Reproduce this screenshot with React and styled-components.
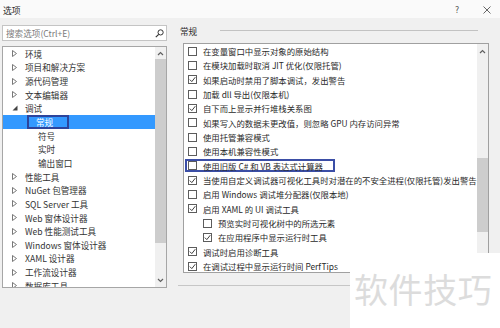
import React from "react";
import styled, { createGlobalStyle } from "styled-components";

const GlobalStyle = createGlobalStyle`
  html, body { margin: 0; padding: 0; }
  body {
    width: 500px;
    height: 328px;
    overflow: hidden;
    background: #f0f0f0;
    font-family: "Noto Sans CJK SC", "Noto Sans", sans-serif;
  }
  * { box-sizing: border-box; }
`;

const Window = styled.div`
  position: relative;
  width: 500px;
  height: 328px;
  display: flex;
  flex-direction: column;
  background: #f0f0f0;
  color: #2a2a2a;
  font-size: 8.6px;
  overflow: hidden;
`;

const TitleBar = styled.div`
  height: 18px;
  flex: none;
  background: #fafafa;
  display: flex;
  align-items: center;
  justify-content: space-between;
  padding: 2px 0 0 3px;
`;

const Title = styled.span`
  font-size: 8.8px;
  color: #2b2b2b;
`;

const TitleButtons = styled.div`
  display: flex;
  gap: 4px;
  height: 100%;
`;

const TitleButton = styled.div`
  width: 26px;
  height: 100%;
  display: flex;
  align-items: center;
  justify-content: center;
  color: #555;
  font-size: 8px;
  font-family: "DejaVu Sans", sans-serif;
`;

const Body = styled.div`
  flex: 1;
  display: flex;
  padding: 7px 0 0 2px;
  min-height: 0;
`;

const LeftPane = styled.div`
  width: 165px;
  flex: none;
  display: flex;
  flex-direction: column;
`;

const SearchBox = styled.div`
  height: 16px;
  background: #fff;
  border: 1px solid #c4c4c4;
  display: flex;
  align-items: center;
  justify-content: space-between;
  padding: 0 2px 0 3px;
  color: #7a7a7a;
`;

const Tree = styled.div`
  margin-top: 5px;
  height: 242px;
  background: #fff;
  border: 1px solid #a6a6a6;
  display: flex;
  overflow: hidden;
`;

const TreeList = styled.div`
  flex: 1;
  display: flex;
  flex-direction: column;
  min-width: 0;
`;

const TreeRow = styled.div`
  height: 13.65px;
  flex: none;
  display: flex;
  align-items: center;
  gap: 3px;
  padding-left: ${(p) => 6 + p.$depth * 13}px;
  background: ${(p) => (p.$selected ? "#3399ff" : "transparent")};
  color: ${(p) => (p.$selected ? "#fff" : "#333")};
  white-space: nowrap;
`;

const ArrowSlot = styled.span`
  width: 11px;
  height: 100%;
  flex: none;
  display: flex;
  align-items: center;
  justify-content: center;
`;

const FocusLabel = styled.span`
  height: 100%;
  display: flex;
  align-items: center;
  border: 2px solid ${(p) => (p.$focused ? "#2d449c" : "transparent")};
  margin-left: ${(p) => (p.$focused ? -9 : 0)}px;
  padding: 0 ${(p) => (p.$focused ? 14 : 0)}px 0 ${(p) => (p.$focused ? 7 : 0)}px;
`;

const ScrollBar = styled.div`
  width: 11px;
  flex: none;
  background: #f0f0f0;
  display: flex;
  flex-direction: column;
  align-items: center;
`;

const ScrollArrow = styled.div`
  height: ${(p) => p.$h}px;
  width: 100%;
  flex: none;
  display: flex;
  align-items: center;
  justify-content: center;
`;

const Thumb = styled.div`
  width: 100%;
  flex: none;
  background: #cdcdcd;
`;

const ScrollSpacer = styled.div`
  flex: 1;
`;

const RightPane = styled.div`
  flex: 1;
  margin-left: 11px;
  display: flex;
  flex-direction: column;
  min-width: 0;
`;

const SectionHeader = styled.div`
  height: 11px;
  display: flex;
  align-items: center;
  padding-left: 2px;
  margin-right: 22px;
  color: #2b2b2b;
`;

const HeaderRule = styled.div`
  flex: 1;
  height: 1px;
  margin-left: 23px;
  background: #c2c2c2;
`;

const OptionsBox = styled.div`
  margin: 7px 0 0 5px;
  width: 306px;
  height: 230px;
  background: #fff;
  border: 1px solid #a0a0a0;
  display: flex;
  overflow: hidden;
`;

const OptionList = styled.div`
  flex: 1;
  min-width: 0;
  overflow: hidden;
  display: flex;
  flex-direction: column;
  font-size: 8.4px;
`;

const OptionRow = styled.div`
  height: 14.33px;
  flex: none;
  display: flex;
  align-items: center;
  padding-left: ${(p) => 4 + p.$indent * 15}px;
  white-space: nowrap;
`;

const OptionContent = styled.div`
  height: 13px;
  display: flex;
  align-items: center;
  gap: 6px;
  margin-left: -3px;
  padding: 0 ${(p) => (p.$focused ? 10 : 0)}px 0 1px;
  border: 2px solid ${(p) => (p.$focused ? "#3b4ea6" : "transparent")};
`;

const Box = styled.span`
  width: 9px;
  height: 9px;
  flex: none;
  border: 1px solid #5c5c5c;
  background: #fff;
  display: flex;
  align-items: center;
  justify-content: center;
`;

const BottomRule = styled.div`
  margin: 12px 11px 0 0;
  height: 1px;
  background: #c6c6c6;
`;

const Watermark = styled.div`
  position: absolute;
  right: 0;
  bottom: 0;
  width: 150px;
  height: 75px;
  background: #fff;
  display: flex;
  align-items: center;
  padding: 0 0 4px 4px;
  font-size: 34px;
  letter-spacing: 0.6px;
  color: #dcdcdc;
  white-space: nowrap;
`;

const Closed = () => (
  <svg width="5" height="7" viewBox="0 0 5 7">
    <polygon points="0.5,0.5 4.5,3.5 0.5,6.5" fill="none" stroke="#6a6a6a" strokeWidth="0.9" />
  </svg>
);

const Open = () => (
  <svg width="6" height="6" viewBox="0 0 6 6">
    <polygon points="5.5,0.5 5.5,5.5 0.5,5.5" fill="#444" />
  </svg>
);

const Up = () => (
  <svg width="7" height="5" viewBox="0 0 7 5">
    <polyline points="1,4 3.5,1.5 6,4" fill="none" stroke="#606060" strokeWidth="1.2" />
  </svg>
);

const Down = () => (
  <svg width="7" height="5" viewBox="0 0 7 5">
    <polyline points="1,1 3.5,3.5 6,1" fill="none" stroke="#606060" strokeWidth="1.2" />
  </svg>
);

const Check = () => (
  <svg width="7" height="7" viewBox="0 0 7 7">
    <polyline points="0.8,3.6 2.8,5.6 6.3,1.2" fill="none" stroke="#2a2a2a" strokeWidth="0.9" />
  </svg>
);

const SearchIcon = () => (
  <svg width="9" height="9" viewBox="0 0 9 9">
    <circle cx="5.6" cy="3.4" r="2.6" fill="none" stroke="#333" strokeWidth="1" />
    <line x1="3.7" y1="5.3" x2="0.8" y2="8.2" stroke="#333" strokeWidth="1.2" />
  </svg>
);

const CloseIcon = () => (
  <svg width="8" height="8" viewBox="0 0 8 8">
    <path d="M0.5 0.5 L7.5 7.5 M7.5 0.5 L0.5 7.5" stroke="#555" strokeWidth="0.9" />
  </svg>
);

const treeItems = [
  { label: "环境", arrow: "closed", depth: 0 },
  { label: "项目和解决方案", arrow: "closed", depth: 0 },
  { label: "源代码管理", arrow: "closed", depth: 0 },
  { label: "文本编辑器", arrow: "closed", depth: 0 },
  { label: "调试", arrow: "open", depth: 0 },
  { label: "常规", depth: 1, selected: true },
  { label: "符号", depth: 1 },
  { label: "实时", depth: 1 },
  { label: "输出窗口", depth: 1 },
  { label: "性能工具", arrow: "closed", depth: 0 },
  { label: "NuGet 包管理器", arrow: "closed", depth: 0 },
  { label: "SQL Server 工具", arrow: "closed", depth: 0 },
  { label: "Web 窗体设计器", arrow: "closed", depth: 0 },
  { label: "Web 性能测试工具", arrow: "closed", depth: 0 },
  { label: "Windows 窗体设计器", arrow: "closed", depth: 0 },
  { label: "XAML 设计器", arrow: "closed", depth: 0 },
  { label: "工作流设计器", arrow: "closed", depth: 0 },
  { label: "数据库工具", arrow: "closed", depth: 0 },
];

const options = [
  { label: "在变量窗口中显示对象的原始结构", checked: false },
  { label: "在模块加载时取消 JIT 优化(仅限托管)", checked: false },
  { label: "如果启动时禁用了脚本调试，发出警告", checked: true },
  { label: "加载 dll 导出(仅限本机)", checked: false },
  { label: "自下而上显示并行堆栈关系图", checked: true },
  { label: "如果写入的数据未更改值，则忽略 GPU 内存访问异常", checked: false },
  { label: "使用托管兼容模式", checked: false },
  { label: "使用本机兼容性模式", checked: false },
  { label: "使用旧版 C# 和 VB 表达式计算器", checked: false, focused: true },
  { label: "当使用自定义调试器可视化工具时对潜在的不安全进程(仅限托管)发出警告", checked: true },
  { label: "启用 Windows 调试堆分配器(仅限本地)", checked: false },
  { label: "启用 XAML 的 UI 调试工具", checked: true },
  { label: "预览实时可视化树中的所选元素", checked: false, indent: 1 },
  { label: "在应用程序中显示运行时工具", checked: true, indent: 1 },
  { label: "调试时启用诊断工具", checked: true },
  { label: "在调试过程中显示运行时间 PerfTips", checked: true },
];

const Scroll = ({ upH, thumbTop, thumbH, downH }) => (
  <ScrollBar>
    <ScrollArrow $h={upH}>
      <Up />
    </ScrollArrow>
    <Thumb style={{ marginTop: thumbTop, height: thumbH }} />
    <ScrollSpacer />
    <ScrollArrow $h={downH}>
      <Down />
    </ScrollArrow>
  </ScrollBar>
);

export default function App() {
  return (
    <>
      <GlobalStyle />
      <Window>
        <TitleBar>
          <Title>选项</Title>
          <TitleButtons>
            <TitleButton>?</TitleButton>
            <TitleButton>
              <CloseIcon />
            </TitleButton>
          </TitleButtons>
        </TitleBar>
        <Body>
          <LeftPane>
            <SearchBox>
              <span>搜索选项(Ctrl+E)</span>
              <SearchIcon />
            </SearchBox>
            <Tree>
              <TreeList>
                {treeItems.map((it) => (
                  <TreeRow key={it.label} $depth={it.depth} $selected={it.selected}>
                    <ArrowSlot>
                      {it.arrow === "closed" && <Closed />}
                      {it.arrow === "open" && <Open />}
                    </ArrowSlot>
                    <FocusLabel $focused={it.selected}>{it.label}</FocusLabel>
                  </TreeRow>
                ))}
              </TreeList>
              <Scroll upH={12} thumbTop={0} thumbH={184} downH={14} />
            </Tree>
          </LeftPane>
          <RightPane>
            <SectionHeader>
              <span>常规</span>
              <HeaderRule />
            </SectionHeader>
            <OptionsBox>
              <OptionList>
                {options.map((o) => (
                  <OptionRow key={o.label} $indent={o.indent || 0}>
                    <OptionContent $focused={o.focused}>
                      <Box>{o.checked && <Check />}</Box>
                      <span>{o.label}</span>
                    </OptionContent>
                  </OptionRow>
                ))}
              </OptionList>
              <Scroll upH={14} thumbTop={100} thumbH={74} downH={14} />
            </OptionsBox>
            <BottomRule />
          </RightPane>
        </Body>
        <Watermark>软件技巧</Watermark>
      </Window>
    </>
  );
}
